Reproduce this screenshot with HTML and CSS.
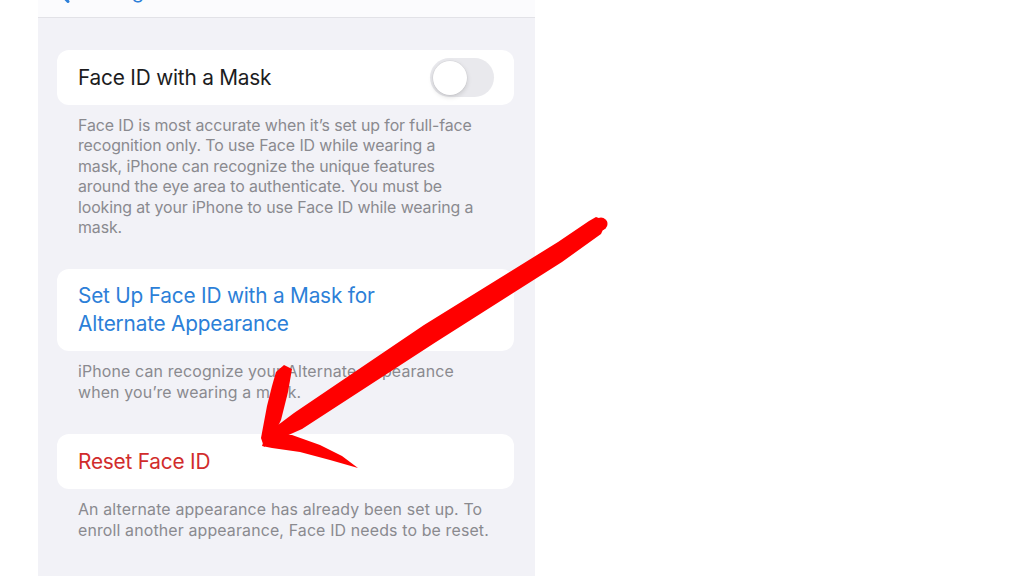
FILE: index.html
```html
<!DOCTYPE html>
<html lang="en">
<head>
<meta charset="utf-8">
<title>Face ID with a Mask</title>
<link rel="stylesheet" href="styles.css">
</head>
<body>
<div class="page">
  <div class="phone">
    <div class="navbar">
      <div class="back">
        <svg class="chev" width="13" height="22" viewBox="0 0 13 22"><path d="M11 1.5 L2 11 L11 20.5" fill="none" stroke="#2c7fd8" stroke-width="3" stroke-linecap="round" stroke-linejoin="round"/></svg>
        <span class="back-label">Settings</span>
      </div>
    </div>
    <div class="content">
      <section class="group">
        <div class="card row">
          <span class="label">Face ID with a Mask</span>
          <span class="toggle"><span class="knob"></span></span>
        </div>
        <p class="footer">Face ID is most accurate when it’s set up for full-face<br>recognition only. To use Face ID while wearing a<br>mask, iPhone can recognize the unique features<br>around the eye area to authenticate. You must be<br>looking at your iPhone to use Face ID while wearing a<br>mask.</p>
      </section>
      <section class="group">
        <div class="card tall">
          <span class="link blue">Set Up Face ID with a Mask for<br>Alternate Appearance</span>
        </div>
        <p class="footer wide">iPhone can recognize your Alternate Appearance<br>when you’re wearing a mask.</p>
      </section>
      <section class="group">
        <div class="card row">
          <span class="link red">Reset Face ID</span>
        </div>
        <p class="footer wide">An alternate appearance has already been set up. To<br>enroll another appearance, Face ID needs to be reset.</p>
      </section>
    </div>
  </div>
  <svg class="arrow" width="1024" height="576" viewBox="0 0 1024 576">
    <g fill="#ff0000">
      <circle cx="601" cy="224" r="6.5"/>
      <polygon points="596,217 607,221 601,234 562,262 436,342 302,429 266,445 270,431 294,413 424,325 558,242 589,221"/>
      <polygon points="276,372 284,365 292,369 288,392 281,420 271,441 264,447 261,438 267,406 272,386"/>
      <polygon points="266,434 292,435 320,445 342,456 358,468 330,460 300,452 272,448 262,446"/>
    </g>
  </svg>
</div>
</body>
</html>
```

FILE: styles.css
```css
* { box-sizing: border-box; }

html, body {
  margin: 0;
  padding: 0;
  background: #ffffff;
}

body {
  font-family: Inter, "Noto Sans", "Liberation Sans", sans-serif;
  -webkit-font-smoothing: antialiased;
}

.page {
  position: relative;
  width: 1024px;
  height: 576px;
  overflow: hidden;
  background: #ffffff;
}

.phone {
  margin-left: 38px;
  width: 497px;
  height: 576px;
  background: #f2f2f7;
  display: flex;
  flex-direction: column;
}

.navbar {
  height: 18px;
  background: #fbfbfd;
  border-bottom: 1px solid #e2e2e7;
  overflow: hidden;
  flex: none;
}

.back {
  display: flex;
  align-items: flex-end;
  margin-top: -21px;
  padding-left: 19px;
  height: 24px;
  gap: 8px;
}

.chev {
  flex: none;
}

.back-label {
  color: #2c7fd8;
  font-size: 20px;
  line-height: 24px;
}

.content {
  padding: 32px 21px 0 19px;
  display: flex;
  flex-direction: column;
}

.group {
  display: flex;
  flex-direction: column;
}

.card {
  background: #ffffff;
  border-radius: 12px;
  padding: 0 20px 0 21px;
}

.row {
  height: 55px;
  display: flex;
  align-items: center;
  justify-content: space-between;
}

.tall {
  height: 82px;
  display: flex;
  align-items: center;
}

.label {
  font-size: 20.8px;
  color: #1c1c1e;
  letter-spacing: -0.2px;
}

.link {
  font-size: 20.8px;
  line-height: 28px;
  letter-spacing: -0.2px;
  white-space: nowrap;
}

.blue { color: #2c7fd8; }
.red { color: #d12c2c; }

.toggle {
  width: 64px;
  height: 39px;
  border-radius: 20px;
  background: #e9e9ed;
  padding: 2.5px;
  display: flex;
  align-items: center;
}

.knob {
  width: 34px;
  height: 34px;
  border-radius: 50%;
  background: #ffffff;
  box-shadow: 0 2px 5px rgba(0,0,0,0.15), 0 0 0 0.5px rgba(0,0,0,0.06);
}

.footer {
  margin: 11px 0 31px 0;
  padding: 0 10px 0 21px;
  font-size: 15.9px;
  line-height: 20.4px;
  color: #8a8a8f;
  letter-spacing: -0.1px;
  white-space: nowrap;
}

.footer.wide {
  letter-spacing: 0.15px;
}

.arrow {
  position: absolute;
  top: 0;
  left: 0;
  pointer-events: none;
}
```
